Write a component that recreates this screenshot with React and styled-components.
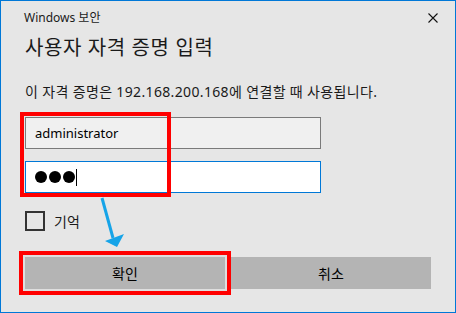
import React from 'react';
import styled, { createGlobalStyle } from 'styled-components';

const GlobalStyle = createGlobalStyle`
    html, body {
        margin: 0;
        padding: 0;
        background: #e6e6e6;
    }
    body {
        font-family: "Noto Sans", "Noto Sans CJK KR", sans-serif;
        color: #000;
    }
`

const Dialog = styled.div`
    position: relative;
    width: 456px;
    height: 313px;
    box-sizing: border-box;
    border: 1px solid #0078d7;
    background: #e6e6e6;
    display: flex;
    flex-direction: column;
`

const Caption = styled.div`
    display: flex;
    justify-content: space-between;
    align-items: center;
    padding: 7px 17px 0 23px;
    height: 19px;
    font-size: 12px;
    line-height: 19px;
    color: #1a1a1a;
`

const CloseButton = styled.svg`
    width: 10px;
    height: 10px;
    display: block;
`

const Body = styled.div`
    display: flex;
    flex-direction: column;
    padding: 0 24px;
`

const Title = styled.div`
    margin-top: 7px;
    font-size: 20px;
    line-height: 28px;
    letter-spacing: 0.6px;
    color: #1a1a1a;
`

const Message = styled.div`
    margin-top: 20px;
    font-size: 14px;
    line-height: 20px;
    letter-spacing: 0.35px;
    color: #1a1a1a;
`

const InputGroup = styled.div`
    position: relative;
    margin-top: 15px;
    display: flex;
    flex-direction: column;
    gap: 12px;
`

const Field = styled.div`
    width: 296px;
    height: 32px;
    box-sizing: border-box;
    border: 1px solid ${props => props.focused ? '#0078d7' : '#7a7a7a'};
    background: ${props => props.focused ? '#ffffff' : '#f0f0f0'};
    display: flex;
    align-items: center;
    padding-left: 9px;
    font-size: 13px;
    color: #000;
`

const Dots = styled.span`
    display: flex;
    gap: 2px;
    align-items: center;
`

const Dot = styled.span`
    width: 12px;
    height: 12px;
    border-radius: 50%;
    background: #000;
`

const Caret = styled.span`
    width: 1px;
    height: 17px;
    background: #000;
    margin-left: 1px;
`

const Highlight = styled.div`
    position: absolute;
    left: -5px;
    top: -5px;
    width: 151px;
    height: 85px;
    box-sizing: border-box;
    border: 4px solid #ff0000;
    pointer-events: none;
`

const CheckRow = styled.label`
    margin-top: 18px;
    display: flex;
    align-items: center;
    gap: 9px;
    font-size: 14px;
    color: #1a1a1a;
`

const CheckBox = styled.span`
    width: 20px;
    height: 20px;
    box-sizing: border-box;
    border: 2px solid #333333;
    background: #e6e6e6;
`

const Arrow = styled.svg`
    position: absolute;
    left: 95px;
    top: 195px;
    width: 35px;
    height: 55px;
    pointer-events: none;
`

const ButtonRow = styled.div`
    margin-top: 26px;
    display: flex;
    gap: 6px;
`

const Button = styled.button`
    width: 200px;
    height: 32px;
    border: none;
    background: #b4b4b4;
    font-family: "Noto Sans", "Noto Sans CJK KR", sans-serif;
    font-size: 14px;
    color: #000;
    padding: 0;
    ${props => props.marked && `
        box-shadow: 0 0 0 2px #dedede, 0 0 0 6px #ff0000;
    `}
`

function App() {
    return (
        <>
            <GlobalStyle />
            <Dialog>
                <Caption>
                    <span>Windows 보안</span>
                    <CloseButton viewBox="0 0 10 10">
                        <path d="M0.5 0.5 L9.5 9.5 M9.5 0.5 L0.5 9.5" stroke="#111" strokeWidth="1.1" />
                    </CloseButton>
                </Caption>
                <Body>
                    <Title>사용자 자격 증명 입력</Title>
                    <Message>이 자격 증명은 192.168.200.168에 연결할 때 사용됩니다.</Message>
                    <InputGroup>
                        <Field>administrator</Field>
                        <Field focused>
                            <Dots><Dot /><Dot /><Dot /></Dots>
                            <Caret />
                        </Field>
                        <Highlight />
                    </InputGroup>
                    <CheckRow>
                        <CheckBox />
                        <span>기억</span>
                    </CheckRow>
                    <ButtonRow>
                        <Button marked>확인</Button>
                        <Button>취소</Button>
                    </ButtonRow>
                </Body>
                <Arrow viewBox="0 0 35 55">
                    <line x1="6" y1="2" x2="17" y2="42" stroke="#16a4e8" strokeWidth="3" />
                    <polygon points="21,51 9,45 28,38" fill="#16a4e8" />
                </Arrow>
            </Dialog>
        </>
    );
}

export default App;
